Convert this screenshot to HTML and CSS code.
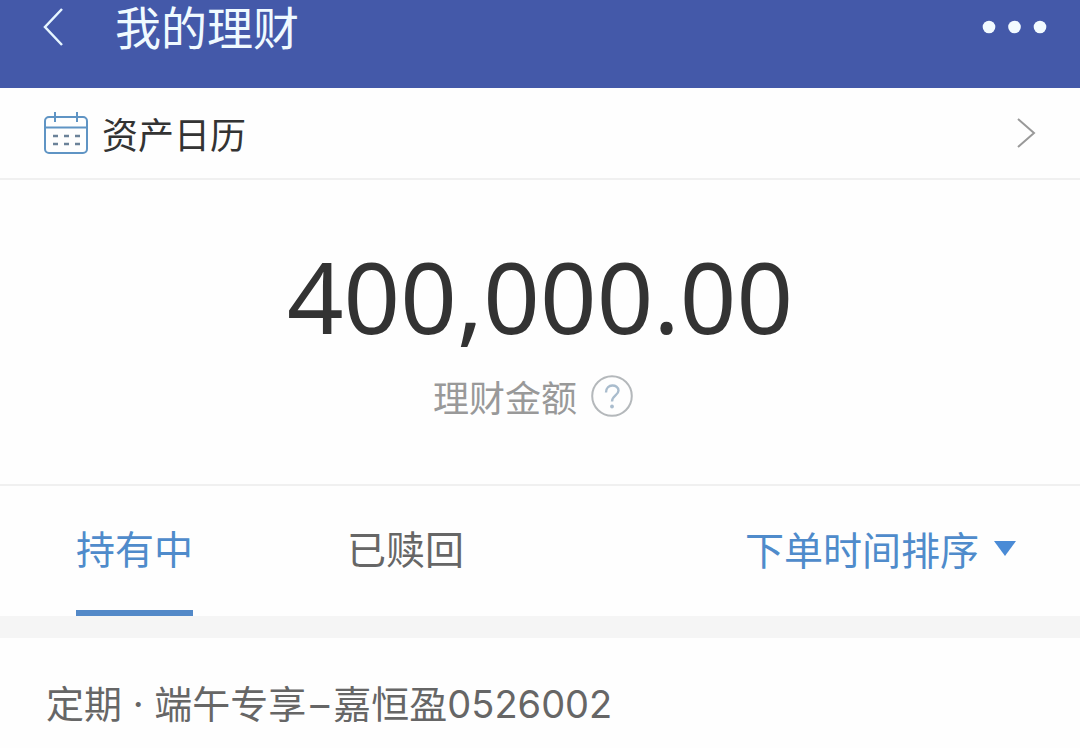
FILE: index.html
```html
<!DOCTYPE html>
<html lang="zh-CN">
<head>
  <meta charset="UTF-8">
  <meta name="viewport" content="width=device-width, initial-scale=1">
  <title>我的理财</title>
  <link rel="stylesheet" href="styles.css">
</head>
<body>
  <header class="topbar">
    <button type="button" class="icon-btn" aria-label="返回">
      <svg width="24" height="40" viewBox="0 0 24 40"><path d="M20 2 3 20l17 18" fill="none" stroke="#e6f6ff" stroke-width="2.5"/></svg>
    </button>
    <h1>我的理财</h1>
    <button type="button" class="icon-btn more" aria-label="更多">
      <svg width="66" height="14" viewBox="0 0 66 14" fill="#f2faff"><circle cx="7" cy="7" r="6.3"/><circle cx="32.5" cy="7" r="6.3"/><circle cx="58" cy="7" r="6.3"/></svg>
    </button>
  </header>

  <main>
    <a href="#calendar" class="calendar-link">
      <svg width="44" height="42" viewBox="0 0 44 42" fill="none" stroke="#5f94c4" stroke-width="2">
        <rect x="1" y="5" width="42" height="36" rx="4"/>
        <path d="M1 15.5h42M11 0v10M33 0v10"/>
        <path d="M9 24h5M20 24h5M31 24h5M9 32h5M20 32h5M31 32h5" stroke="#6b8299" stroke-width="2.5"/>
      </svg>
      <span>资产日历</span>
      <svg class="arrow" width="20" height="32" viewBox="0 0 20 32"><path d="M2 2l16 14L2 30" fill="none" stroke="#999" stroke-width="2"/></svg>
    </a>

    <section class="summary">
      <p class="amount">400,000.00</p>
      <div class="amount-label">
        <span>理财金额</span>
        <button type="button" class="icon-btn" aria-label="说明">
          <svg width="42" height="42" viewBox="0 0 42 42" fill="none">
            <circle cx="21" cy="21" r="19.8" stroke="#b4b8bb" stroke-width="2"/>
            <path d="M15 17.500C15 8 27.500 9 27.500 15.500c0 5-6.500 5-6.500 11" stroke="#a9bccd" stroke-width="2.4"/>
            <circle cx="21" cy="31.500" r="1.9" fill="#a9bccd"/>
          </svg>
        </button>
      </div>
    </section>

    <nav class="tabs">
      <button type="button" class="tab active">持有中</button>
      <button type="button" class="tab">已赎回</button>
      <label class="sort">
        <select aria-label="排序方式">
          <option>下单时间排序</option>
        </select>
        <svg width="22" height="15" viewBox="0 0 22 15"><path d="M0 0h22L11 15z" fill="#4a8bd6"/></svg>
      </label>
    </nav>

    <section class="product">
      <h2>定期 · 端午专享<span class="dash">–</span>嘉恒盈0526002</h2>
    </section>
  </main>
</body>
</html>
```

FILE: styles.css
```css
* {
  box-sizing: border-box;
}

body {
  margin: 0;
  background-color: #fefefe;
  color: #333;
  font-family: "Noto Sans CJK SC", sans-serif;
}

h1, h2, p {
  margin: 0;
  font-weight: 400;
}

svg {
  display: block;
}

button {
  padding: 0;
  border: none;
  background: none;
  font-family: inherit;
  cursor: pointer;
}

.topbar {
  display: flex;
  align-items: center;
  height: 88px;
  padding: 0 32px 34px 42px;
  background-color: #4459a9;
}

.topbar h1 {
  margin-left: 49px;
  padding-top: 4px;
  color: #f0faff;
  font-family: "Liberation Sans", "Noto Sans CJK SC", sans-serif;
  font-size: 46px;
  line-height: 54px;
}

.more {
  margin-left: auto;
}

.calendar-link {
  display: flex;
  align-items: center;
  height: 92px;
  padding: 0 44px;
  border-bottom: 2px solid #f0f0f0;
  color: #333;
  font-size: 36px;
  text-decoration: none;
}

.calendar-link span {
  margin-left: 14px;
}

.arrow {
  margin-left: auto;
}

.summary {
  padding: 60px 0 62px;
  border-bottom: 2px solid #f0f0f0;
  text-align: center;
}

.amount {
  font-family: "Noto Sans", sans-serif;
  font-size: 99px;
  line-height: 112px;
}

.amount-label {
  display: flex;
  justify-content: center;
  align-items: center;
  gap: 14px;
  height: 52px;
  margin-top: 18px;
  padding-right: 14px;
  color: #999;
  font-size: 36px;
}

.tabs {
  display: flex;
  height: 130px;
  padding: 0 64px 0 76px;
}

.tab {
  margin-right: 154px;
  padding-bottom: 2px;
  border-bottom: 6px solid transparent;
  color: #666;
  font-size: 39px;
}

.tab.active {
  border-bottom-color: #5389c8;
  color: #4f8bcb;
}

.sort {
  display: flex;
  align-items: center;
  gap: 14px;
  margin-left: auto;
  padding-bottom: 6px;
}

.sort select {
  padding: 0;
  border: none;
  background: none;
  color: #4f8bcb;
  font-family: inherit;
  font-size: 39px;
  appearance: none;
}

.product {
  padding: 38px 46px 16px;
  border-top: 22px solid #f5f5f5;
}

.product h2 {
  color: #666;
  font-family: Inter, "Noto Sans CJK SC", sans-serif;
  font-size: 38px;
  line-height: 56px;
}

.dash {
  padding: 0 4px;
}
```
